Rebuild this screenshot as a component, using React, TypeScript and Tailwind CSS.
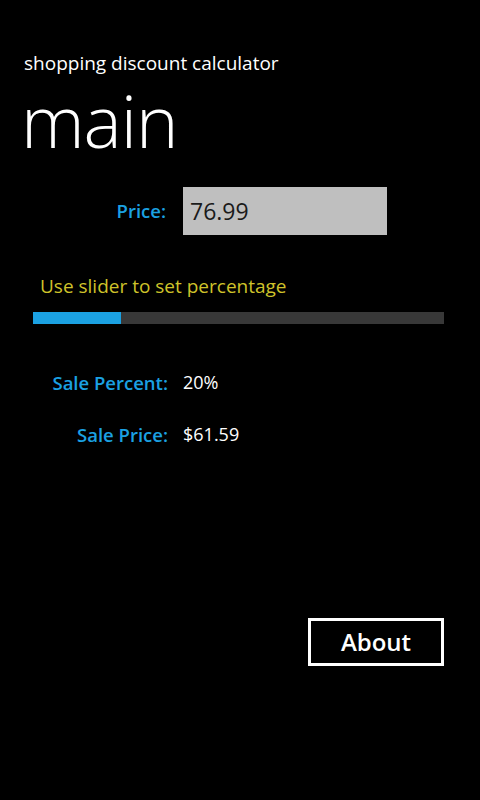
import React from "react";

export default function App() {
  const pct = 20;
  return (
    <div
      className="w-[480px] h-[800px] bg-black text-white overflow-hidden flex flex-col"
      style={{ fontFamily: '"Open Sans", "Noto Sans", sans-serif' }}
    >
      <div className="pl-[24px] pt-[50px] text-[19px] leading-[26px]">shopping discount calculator</div>
      <div className="pl-[21px] mt-[4px] text-[72px] leading-[80px] font-light tracking-[-1px]">main</div>

      <div className="flex items-center mt-[27px]">
        <div className="w-[166px] text-right text-[18.5px] font-semibold text-[#1ba1e2]">Price:</div>
        <div className="ml-[17px] w-[204px] h-[48px] bg-[#bfbfbf] flex items-center pl-[7px] text-[23px] text-[#1a1a1a]">
          76.99
        </div>
      </div>

      <div className="pl-[40px] mt-[38px] text-[19px] leading-[26px] text-[#cfc32a]">Use slider to set percentage</div>
      <div className="ml-[33px] mt-[13px] w-[411px] h-[12px] bg-[#383838] flex">
        <div className="h-full bg-[#1ba1e2]" style={{ width: `${(pct / 100) * 411 + 6}px` }} />
      </div>

      <div className="flex items-center mt-[45px]">
        <div className="w-[168px] text-right text-[18.5px] font-semibold text-[#1ba1e2]">Sale Percent:</div>
        <div className="ml-[15px] text-[18px]">20%</div>
      </div>
      <div className="flex items-center mt-[24px]">
        <div className="w-[168px] text-right text-[18.5px] font-semibold text-[#1ba1e2]">Sale Price:</div>
        <div className="ml-[15px] text-[18px]">$61.59</div>
      </div>

      <div className="flex justify-end pr-[36px] mt-[169px]">
        <div className="w-[136px] h-[48px] border-[3px] border-white flex items-center justify-center text-[24px] font-semibold">
          About
        </div>
      </div>
    </div>
  );
}
